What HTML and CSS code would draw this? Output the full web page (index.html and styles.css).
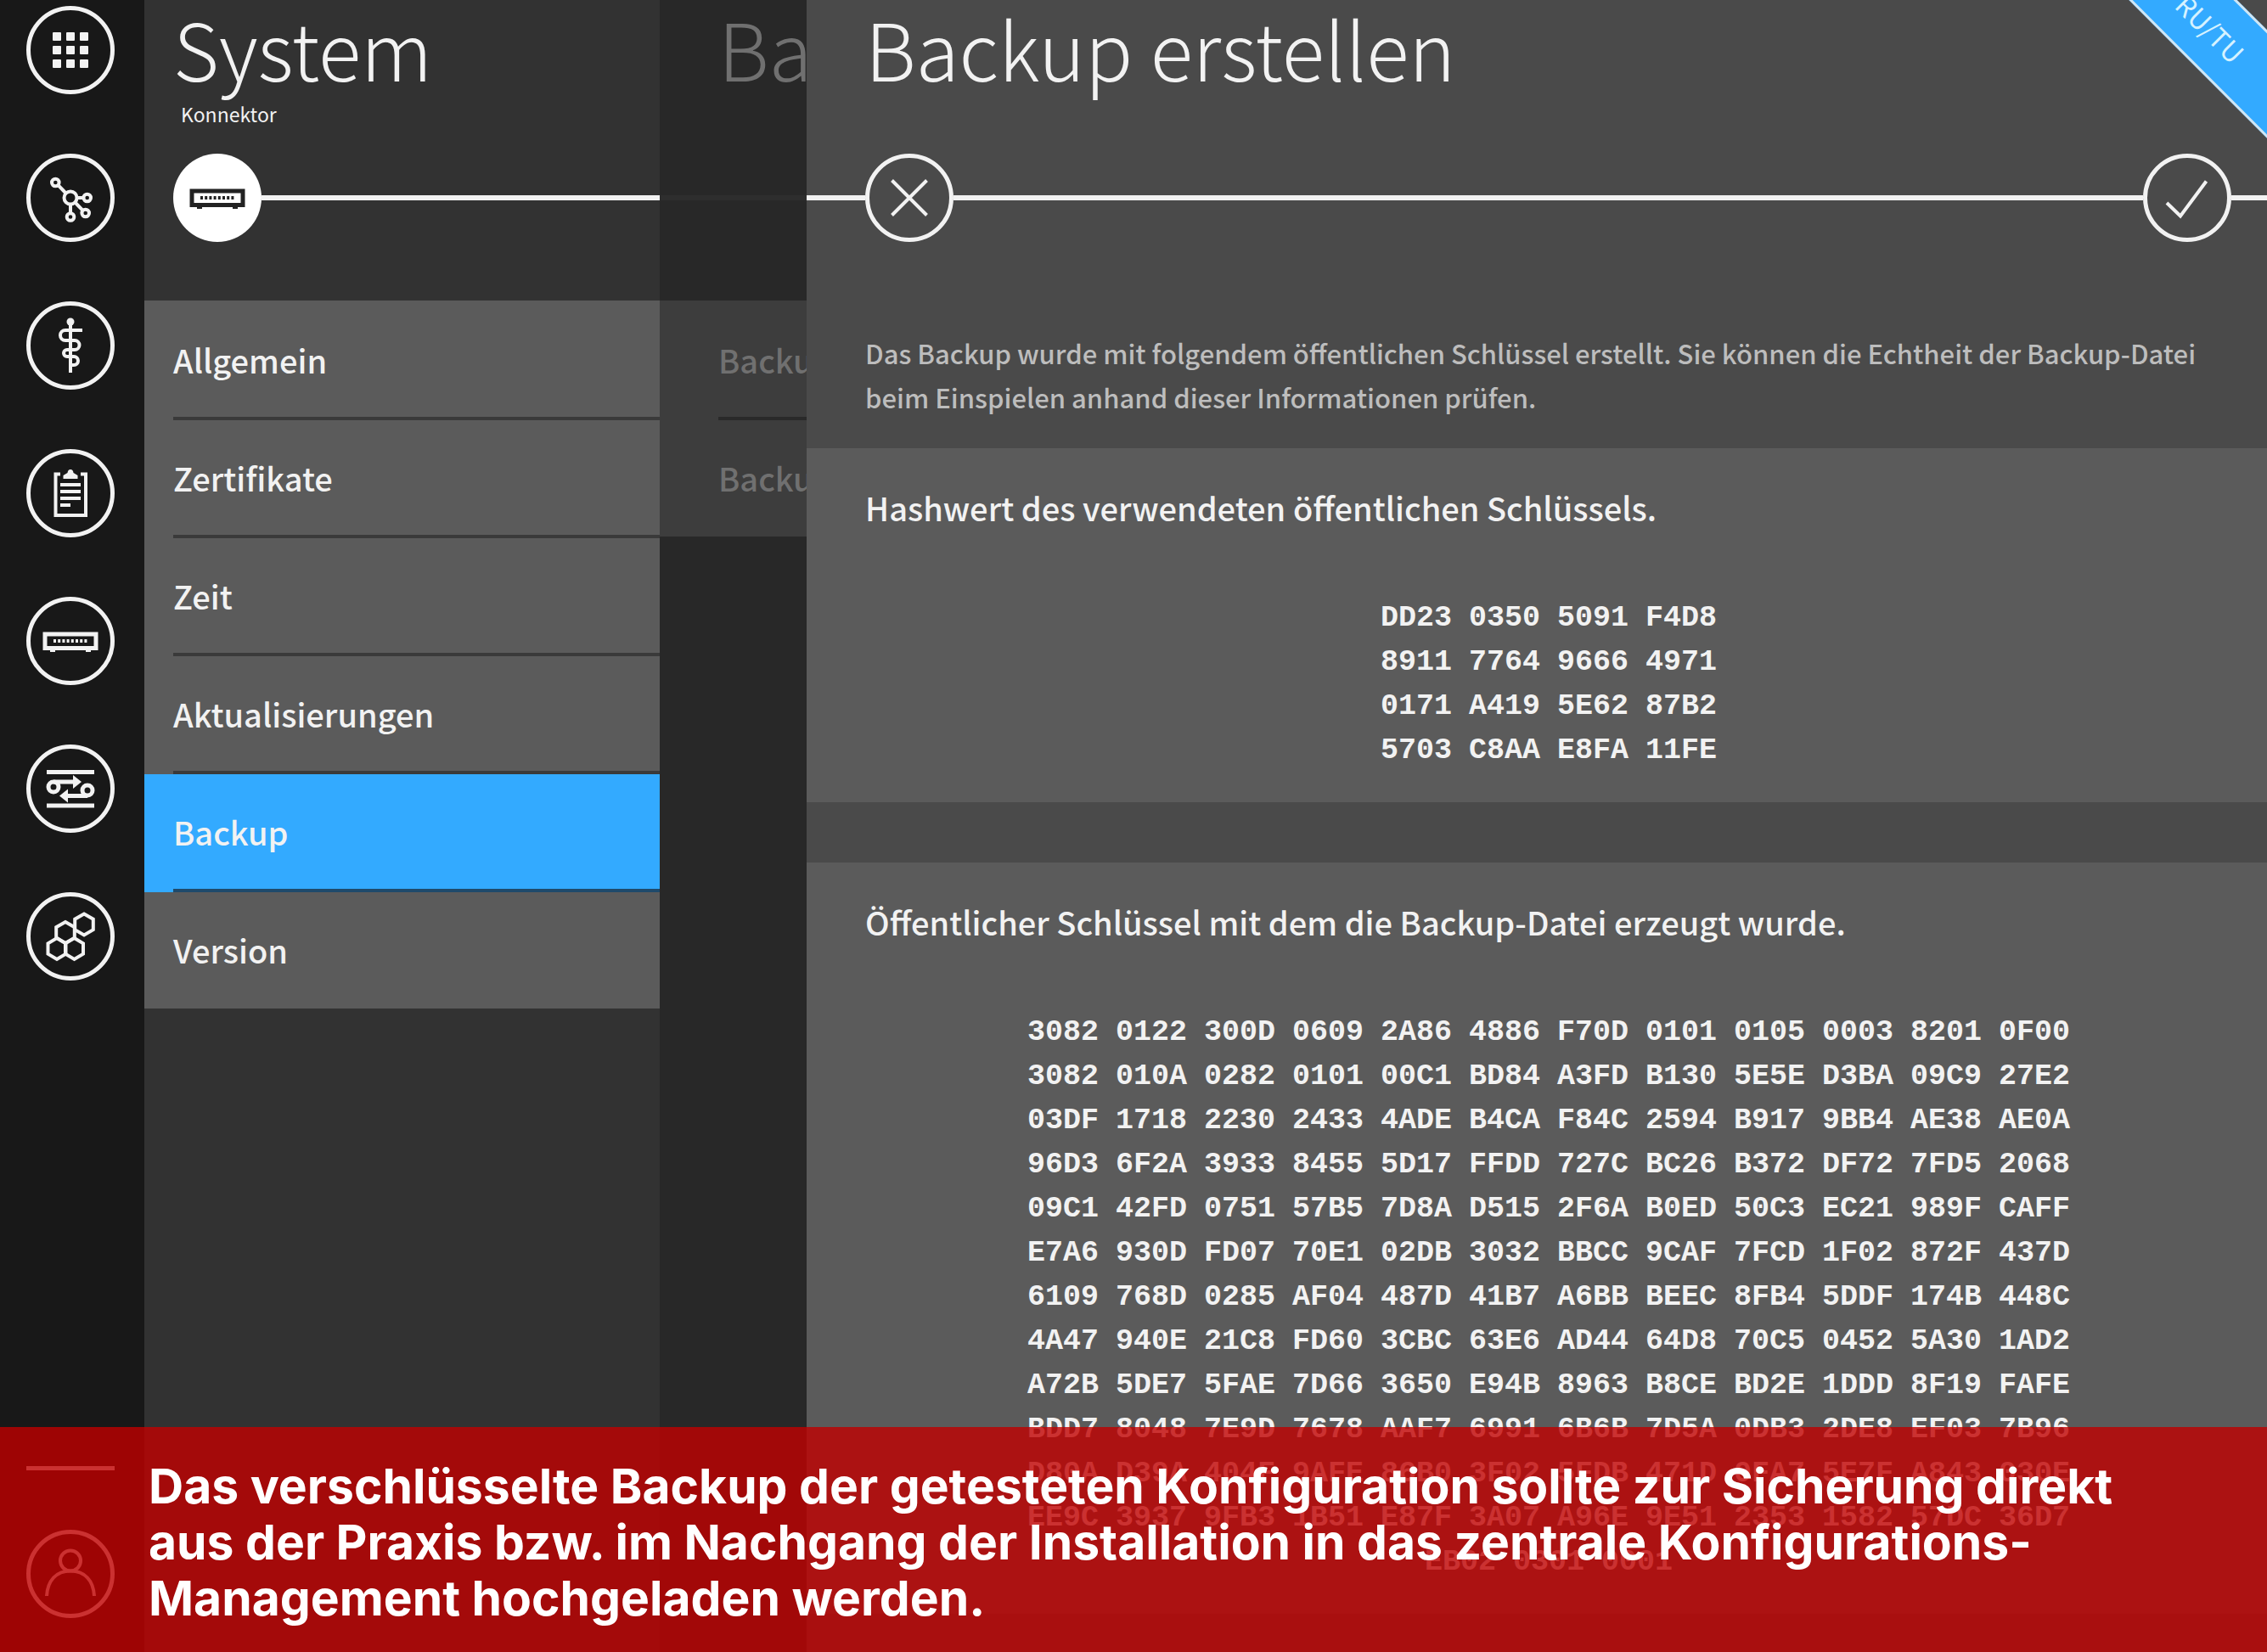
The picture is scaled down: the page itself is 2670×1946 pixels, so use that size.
FILE: index.html
```html
<!DOCTYPE html>
<html lang="de">
<head>
<meta charset="utf-8">
<meta name="viewport" content="width=device-width, initial-scale=1">
<title>Backup erstellen</title>
<link rel="stylesheet" href="styles.css">
</head>
<body>
<div class="app">
  <nav class="rail" aria-label="Hauptnavigation">
    <a class="rail-link" href="#home" aria-label="Home"><svg class="icon" viewBox="-52 -52 104 104"><circle class="ring" r="49.5"/><g class="solid"><rect x="-21" y="-21" width="10" height="10" rx="1"/><rect x="-5" y="-21" width="10" height="10" rx="1"/><rect x="11" y="-21" width="10" height="10" rx="1"/><rect x="-21" y="-5" width="10" height="10" rx="1"/><rect x="-5" y="-5" width="10" height="10" rx="1"/><rect x="11" y="-5" width="10" height="10" rx="1"/><rect x="-21" y="11" width="10" height="10" rx="1"/><rect x="-5" y="11" width="10" height="10" rx="1"/><rect x="11" y="11" width="10" height="10" rx="1"/></g></svg></a>
    <a class="rail-link" href="#netz" aria-label="Netzwerk"><svg class="icon" viewBox="-52 -52 104 104"><circle class="ring" r="49.5"/><g class="line"><circle cx="0" cy="0" r="7.5"/><circle cx="-17.7" cy="-18" r="4.3"/><circle cx="19.7" cy="0" r="4.3"/><circle cx="17.7" cy="18" r="4.3"/><circle cx="0" cy="22.5" r="4.3"/><path d="M-14.5-14.8-5.5-5.5M7.5 0H15.5M5.5 5.5 14.5 14.8M0 7.5V18"/></g></svg></a>
    <a class="rail-link" href="#praxis" aria-label="Praxis"><svg class="icon" viewBox="-52 -52 104 104"><circle class="ring" r="49.5"/><circle class="solid" cx="0" cy="-28" r="4.5"/><path class="line" d="M0-28V32"/><path class="line" d="M14-18H-6a6 6 0 0 0 0 12H5a5.500 5.500 0 0 1 0 11H-4a4 4 0 0 0 0 8H4a5 5 0 0 1 0 10H-2"/></svg></a>
    <a class="rail-link" href="#protokoll" aria-label="Protokoll"><svg class="icon" viewBox="-52 -52 104 104"><circle class="ring" r="49.5"/><path class="line" d="M-12-22.500H-17.500V26H18V-22.500H12M-12-10H12M-12-2H12M-12 6H12M-12 14H0"/><path class="solid" d="M-8.500-17V-21L-3.500-24Q-3-28 0-28T3.500-24L8.500-21V-17Z"/></svg></a>
    <a class="rail-link" href="#konnektor" aria-label="Konnektor"><svg class="icon" viewBox="-52 -52 104 104"><circle class="ring" r="49.5"/><rect class="line heavy" x="-30" y="-8" width="60" height="16.500"/><path class="line" stroke-dasharray="3 2.200" d="M-20 0H20"/><path class="solid" d="M-24 9H-18V13H-24ZM18 9H24V13H18Z"/></svg></a>
    <a class="rail-link" href="#dienste" aria-label="Dienste"><svg class="icon" viewBox="-52 -52 104 104"><circle class="ring" r="49.5"/><g class="line heavy"><path d="M-28-19.500H28M-28 20H28M-20-8H6M20 8.500H-6"/><circle cx="-20" cy="-2" r="6"/><circle cx="20" cy="2" r="6"/></g><path class="solid" d="M3-16 13-8 3 0ZM-3 0.500-13 8.500-3 16.500Z"/></svg></a>
    <a class="rail-link" href="#module" aria-label="Module"><svg class="icon" viewBox="-52 -52 104 104"><circle class="ring" r="49.5"/><g class="line"><path d="M16-26.500 26.800-20.300V-7.800L16-1.500 5.200-7.800V-20.300Z"/><path d="M-6-17 4.800-10.800V1.700L-6 8-16.800 1.700V-10.800Z"/><path d="M-16 2-5.500 8.300V20.700L-16 27-26.500 20.700V8.300Z"/><path d="M4.500 2 15 8.300V20.700L4.500 27-6 20.700V8.300Z"/></g></svg></a>
    <hr class="rail-rule">
    <a class="rail-link" href="#konto" aria-label="Benutzerkonto"><svg class="icon" viewBox="-52 -52 104 104"><circle class="ring" r="49.5"/><g class="line"><circle cx="0" cy="-15.500" r="12"/><path d="M-28 26C-27 8-17-3.500 0-3.500S27 8 28 26"/></g></svg></a>
  </nav>

  <section class="panel system">
    <header class="head">
      <h2 class="title">System</h2>
      <p class="subtitle">Konnektor</p>
      <div class="track">
        <button class="step step-active" type="button" aria-label="Konnektor"><svg class="icon" viewBox="-52 -52 104 104"><circle class="disc" r="52"/><rect class="line heavy" x="-30" y="-8" width="60" height="16.500"/><path class="line" stroke-dasharray="3 2.200" d="M-20 0H20"/><path class="solid" d="M-24 9H-18V13H-24ZM18 9H24V13H18Z"/></svg></button>
        <span class="rule"></span>
      </div>
    </header>
    <ul class="menu">
      <li><a class="item" href="#allgemein">Allgemein</a></li>
      <li><a class="item" href="#zertifikate">Zertifikate</a></li>
      <li><a class="item" href="#zeit">Zeit</a></li>
      <li><a class="item" href="#aktualisierungen">Aktualisierungen</a></li>
      <li class="current"><a class="item" href="#backup" aria-current="page">Backup</a></li>
      <li><a class="item" href="#version">Version</a></li>
    </ul>
  </section>

  <section class="panel covered">
    <header class="head">
      <h2 class="title">Backup</h2>
      <p class="subtitle"></p>
      <div class="track"><span class="rule"></span></div>
    </header>
    <ul class="menu">
      <li><a class="item" href="#erstellen">Backup</a></li>
      <li><a class="item" href="#einspielen">Backup</a></li>
    </ul>
  </section>

  <main class="panel dialog">
    <header class="head">
      <h1 class="title">Backup erstellen</h1>
      <p class="subtitle"></p>
      <div class="track">
        <span class="rule rule-start"></span>
        <button class="step" type="button" aria-label="Abbrechen"><svg class="icon" viewBox="-52 -52 104 104"><circle class="ring" r="49.5"/><path class="line" d="M-20.500-20.500 20.500 20.500M20.500-20.500-20.500 20.500"/></svg></button>
        <span class="rule"></span>
        <button class="step" type="button" aria-label="Bestätigen"><svg class="icon" viewBox="-52 -52 104 104"><circle class="ring" r="49.5"/><path class="line" d="M-24 6-8 21.500 22.500-19.500"/></svg></button>
        <span class="rule rule-end"></span>
      </div>
      <span class="ribbon">RU/TU</span>
    </header>
    <p class="intro">Das Backup wurde mit folgendem öffentlichen Schlüssel erstellt. Sie können die Echtheit der Backup-Datei beim Einspielen anhand dieser Informationen prüfen.</p>
    <section class="card">
      <h3 class="card-title">Hashwert des verwendeten öffentlichen Schlüssels.</h3>
      <div class="hex">
        <div class="hex-row"><span>DD23</span><span>0350</span><span>5091</span><span>F4D8</span></div>
        <div class="hex-row"><span>8911</span><span>7764</span><span>9666</span><span>4971</span></div>
        <div class="hex-row"><span>0171</span><span>A419</span><span>5E62</span><span>87B2</span></div>
        <div class="hex-row"><span>5703</span><span>C8AA</span><span>E8FA</span><span>11FE</span></div>
      </div>
    </section>
    <section class="card">
      <h3 class="card-title">Öffentlicher Schlüssel mit dem die Backup-Datei erzeugt wurde.</h3>
      <div class="hex">
        <div class="hex-row"><span>3082</span><span>0122</span><span>300D</span><span>0609</span><span>2A86</span><span>4886</span><span>F70D</span><span>0101</span><span>0105</span><span>0003</span><span>8201</span><span>0F00</span></div>
        <div class="hex-row"><span>3082</span><span>010A</span><span>0282</span><span>0101</span><span>00C1</span><span>BD84</span><span>A3FD</span><span>B130</span><span>5E5E</span><span>D3BA</span><span>09C9</span><span>27E2</span></div>
        <div class="hex-row"><span>03DF</span><span>1718</span><span>2230</span><span>2433</span><span>4ADE</span><span>B4CA</span><span>F84C</span><span>2594</span><span>B917</span><span>9BB4</span><span>AE38</span><span>AE0A</span></div>
        <div class="hex-row"><span>96D3</span><span>6F2A</span><span>3933</span><span>8455</span><span>5D17</span><span>FFDD</span><span>727C</span><span>BC26</span><span>B372</span><span>DF72</span><span>7FD5</span><span>2068</span></div>
        <div class="hex-row"><span>09C1</span><span>42FD</span><span>0751</span><span>57B5</span><span>7D8A</span><span>D515</span><span>2F6A</span><span>B0ED</span><span>50C3</span><span>EC21</span><span>989F</span><span>CAFF</span></div>
        <div class="hex-row"><span>E7A6</span><span>930D</span><span>FD07</span><span>70E1</span><span>02DB</span><span>3032</span><span>BBCC</span><span>9CAF</span><span>7FCD</span><span>1F02</span><span>872F</span><span>437D</span></div>
        <div class="hex-row"><span>6109</span><span>768D</span><span>0285</span><span>AF04</span><span>487D</span><span>41B7</span><span>A6BB</span><span>BEEC</span><span>8FB4</span><span>5DDF</span><span>174B</span><span>448C</span></div>
        <div class="hex-row"><span>4A47</span><span>940E</span><span>21C8</span><span>FD60</span><span>3CBC</span><span>63E6</span><span>AD44</span><span>64D8</span><span>70C5</span><span>0452</span><span>5A30</span><span>1AD2</span></div>
        <div class="hex-row"><span>A72B</span><span>5DE7</span><span>5FAE</span><span>7D66</span><span>3650</span><span>E94B</span><span>8963</span><span>B8CE</span><span>BD2E</span><span>1DDD</span><span>8F19</span><span>FAFE</span></div>
        <div class="hex-row"><span>BDD7</span><span>8048</span><span>7E9D</span><span>7678</span><span>AAF7</span><span>6991</span><span>6B6B</span><span>7D5A</span><span>0DB3</span><span>2DE8</span><span>EF03</span><span>7B96</span></div>
        <div class="hex-row"><span>D80A</span><span>D39A</span><span>404F</span><span>9AFE</span><span>86B0</span><span>3F02</span><span>5FDB</span><span>471D</span><span>0FA7</span><span>5E7F</span><span>A843</span><span>030E</span></div>
        <div class="hex-row"><span>EE9C</span><span>3937</span><span>9FB3</span><span>1B51</span><span>E87F</span><span>3A07</span><span>A96E</span><span>9E51</span><span>2353</span><span>1582</span><span>57DC</span><span>36D7</span></div>
        <div class="hex-row"><span>EB02</span><span>0301</span><span>0001</span></div>
      </div>
    </section>
  </main>

  <aside class="caption">
    <p class="caption-text">Das verschlüsselte Backup der getesteten Konfiguration sollte zur Sicherung direkt<br>aus der Praxis bzw. im Nachgang der Installation in das zentrale Konfigurations-<br>Management hochgeladen werden.</p>
  </aside>
</div>
</body>
</html>
```

FILE: styles.css
```css
:root {
  --ui: "Noto Sans CJK SC", "Noto Sans", sans-serif;
  --fg: #f2f2f2;
  --blue: #33aaff;
  --list: #5b5b5b;
  --line: #3a3a3a;
}

* {
  box-sizing: border-box;
}

body,
h1,
h2,
h3,
p,
ul {
  margin: 0;
  padding: 0;
}

body {
  background: #4a4a4a;
  color: var(--fg);
  font-family: var(--ui);
}

.app {
  position: relative;
  display: grid;
  grid-template-columns: 170px 607px 173px minmax(0, 1fr);
  min-height: 100vh;
}

/* Icons */

.icon {
  display: block;
  width: 104px;
  height: 104px;
}

.ring,
.line {
  fill: none;
  stroke: currentColor;
}

.line {
  stroke-width: 4px;
}

.ring,
.heavy {
  stroke-width: 5px;
}

.solid {
  fill: currentColor;
}

.disc {
  fill: #fff;
}

/* Icon rail */

.rail {
  display: flex;
  flex-direction: column;
  align-items: center;
  gap: 70px;
  padding: 7px 5px 40px 0;
  background: #181818;
}

.rail-link {
  color: var(--fg);
}

.rail-rule {
  width: 104px;
  height: 5px;
  margin: auto 0 0;
  border: 0;
  background: var(--fg);
}

/* Panels */

.panel {
  min-width: 0;
  overflow: hidden;
}

.system {
  background: #323232;
}

.covered {
  background: #282828;
  color: #707070;
}

.dialog {
  background: #4a4a4a;
}

.head {
  position: relative;
  height: 354px;
}

.title {
  padding-left: 69px;
  font-size: 93px;
  font-weight: 300;
  line-height: 112px;
  white-space: nowrap;
}

.subtitle {
  height: 44px;
  padding-left: 43px;
  font-size: 23px;
  line-height: 44px;
}

.system .title {
  padding-left: 34px;
}

.track {
  display: flex;
  align-items: center;
  height: 104px;
  margin-top: 25px;
}

.system .track {
  padding-left: 34px;
}

.rule {
  flex: 1;
  height: 6px;
  background: var(--fg);
}

.covered .rule {
  background: #2e2e2e;
}

.rule-start {
  flex: 0 0 69px;
}

.rule-end {
  flex: 0 0 42px;
}

.step {
  flex: none;
  padding: 0;
  border: 0;
  background: none;
  color: var(--fg);
}

.step-active {
  color: #222;
}

.ribbon {
  position: absolute;
  top: -12px;
  right: -134px;
  width: 400px;
  border: solid #cfe6f5;
  border-width: 3px 0;
  background: var(--blue);
  color: #d5f2ff;
  font-size: 32px;
  line-height: 84px;
  text-align: center;
  transform: rotate(45deg);
}

/* Menus */

.menu {
  padding-top: 2px;
  background: var(--list);
  list-style: none;
}

.item {
  display: block;
  height: 139px;
  margin-left: 34px;
  border-bottom: 4px solid var(--line);
  color: inherit;
  font-size: 38px;
  font-weight: 500;
  line-height: 135px;
  text-decoration: none;
  white-space: nowrap;
}

.menu li:last-child .item {
  height: 137px;
  border-bottom: 0;
}

.current {
  background: var(--blue);
}

.current .item {
  border-color: #1f4a6b;
}

.covered .menu {
  background: #3d3d3d;
}

.covered .item {
  margin-left: 69px;
  border-color: #2a2a2a;
}

/* Dialog content */

.intro {
  padding: 36px 69px 34px;
  color: #bdbdbd;
  font-size: 31px;
  font-weight: 500;
  line-height: 52px;
}

.card {
  padding: 44px 41px 35px 69px;
  background: var(--list);
}

.card + .card {
  margin-top: 71px;
}

.card-title {
  margin-bottom: 78px;
  font-size: 38px;
  font-weight: 500;
  line-height: 52px;
}

.hex {
  font-family: "Liberation Mono", monospace;
  font-size: 35px;
  font-weight: 700;
  line-height: 52px;
}

.hex-row {
  display: flex;
  justify-content: center;
  gap: 20px;
}

/* Caption over the lower edge */

.caption {
  position: absolute;
  right: 0;
  bottom: 0;
  left: 0;
  padding: 37px 175px 30px;
  background: rgba(192, 0, 0, 0.8);
}

.caption-text {
  color: #fff;
  font-family: Inter, sans-serif;
  font-size: 57px;
  font-weight: 700;
  line-height: 66px;
  white-space: nowrap;
}
```
